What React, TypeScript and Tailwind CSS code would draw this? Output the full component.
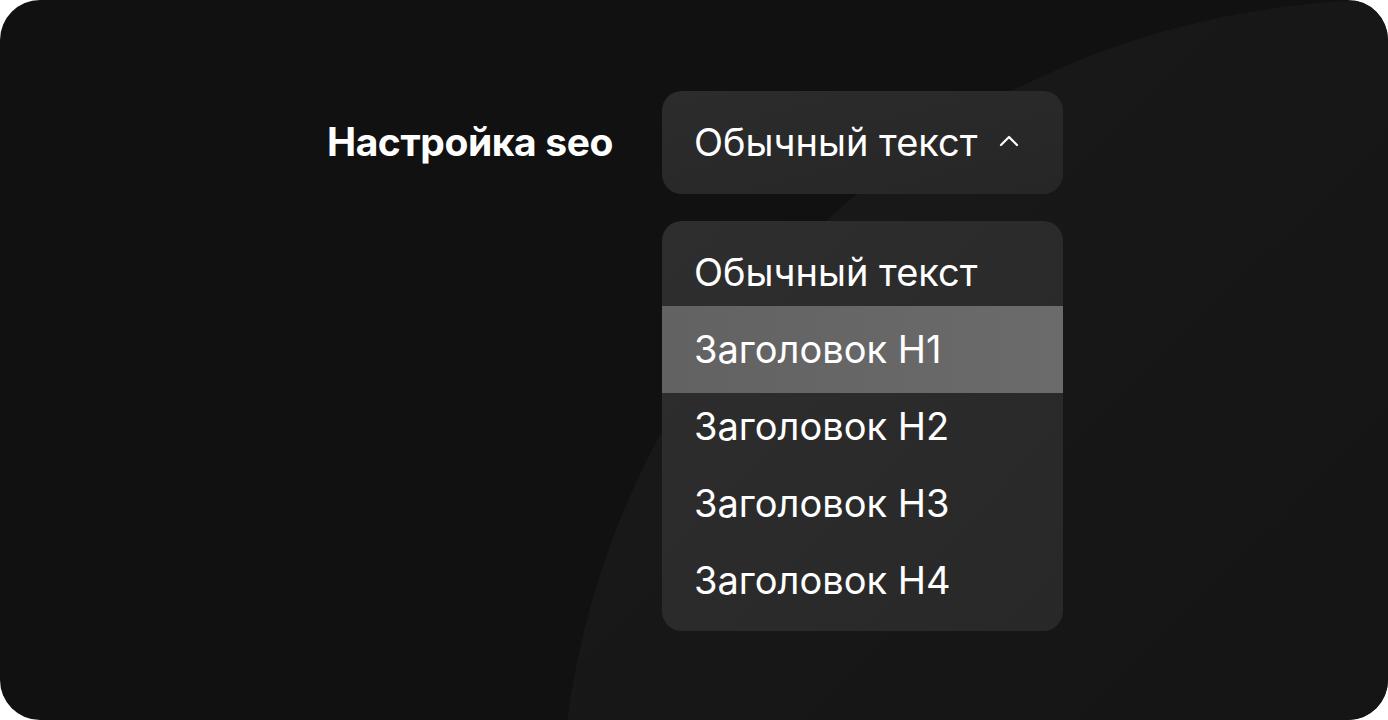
import React, { useState } from "react";

const options = ["Обычный текст", "Заголовок H1", "Заголовок H2", "Заголовок H3", "Заголовок H4"];

const App = () => {
  const [active] = useState(1);

  return (
    <div className="w-[1388px] h-[720px] bg-white" style={{ fontFamily: "Inter, 'Noto Sans', sans-serif" }}>
      <div className="relative w-full h-full rounded-[40px] bg-[#111111] overflow-hidden">
        {/* soft circle in the background */}
        <div className="absolute left-[560px] top-[0px] w-[1660px] h-[1660px] rounded-full bg-gradient-to-br from-[#1a1a1a] via-[#141414] to-[#111111]" />

        <div className="relative flex items-start pt-[91px] pl-[300px] gap-[49px]">
          <div className="w-[313px] h-[103px] flex items-center justify-end text-white text-[39px] font-bold tracking-[-0.4px]">
            Настройка seo
          </div>

          <div className="flex flex-col gap-[27px] w-[401px]">
            <button className="h-[103px] rounded-[20px] bg-gradient-to-br from-[#2c2c2c] to-[#262626] flex items-center pl-[32px] text-white text-[38px] font-normal">
              <span>Обычный текст</span>
              <svg className="ml-[22px] mt-[-4px]" width="20" height="12" viewBox="0 0 20 12" fill="none">
                <path d="M2 10 L10 2 L18 10" stroke="white" strokeWidth="2.2" strokeLinecap="round" strokeLinejoin="round" />
              </svg>
            </button>

            <div className="rounded-[20px] bg-gradient-to-br from-[#2e2e2e] to-[#282828] pt-[13px] pb-[12px] overflow-hidden">
              {options.map((o, i) => (
                <div
                  key={o}
                  className={
                    i === active
                      ? "h-[87px] -my-[5px] flex items-center pl-[32px] text-white text-[38px] bg-gradient-to-r from-[#626262] to-[#6b6b6b]"
                      : "h-[77px] flex items-center pl-[32px] text-white text-[38px]"
                  }
                >
                  {o}
                </div>
              ))}
            </div>
          </div>
        </div>
      </div>
    </div>
  );
};

export default App;
